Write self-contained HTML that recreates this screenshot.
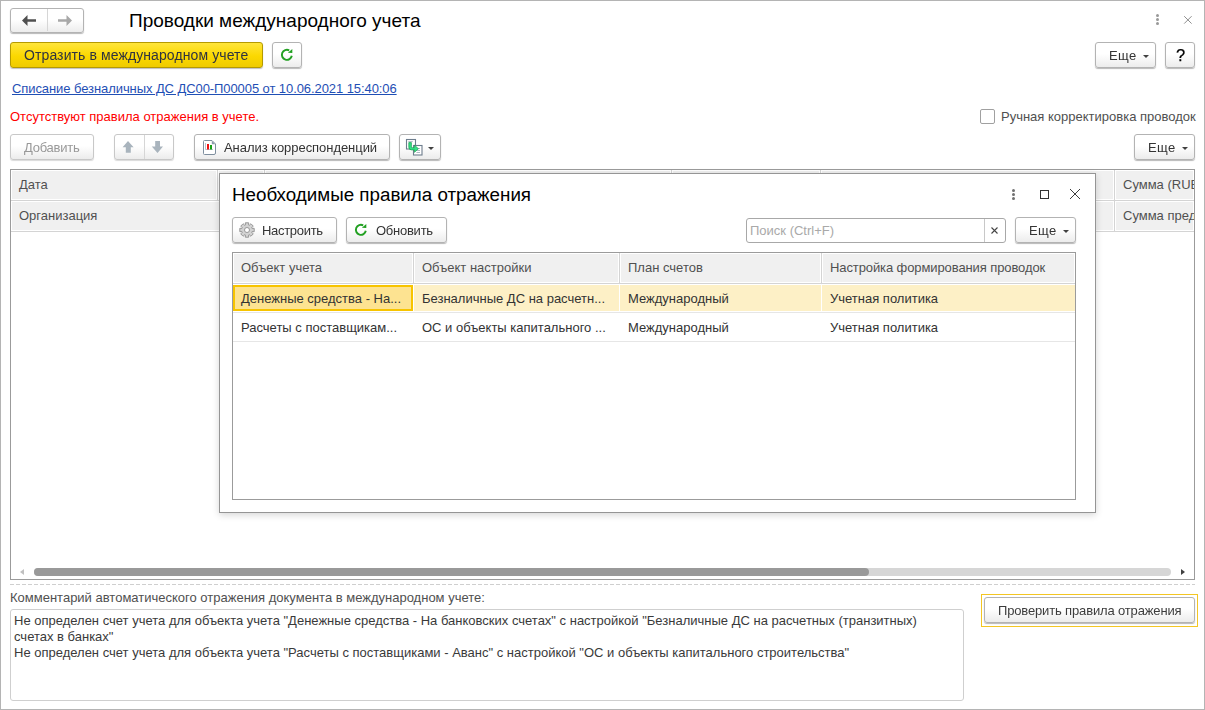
<!DOCTYPE html>
<html><head><meta charset="utf-8">
<style>
*{box-sizing:border-box}
html,body{margin:0;padding:0;width:1205px;height:710px;overflow:hidden;background:#fff}
body{font-family:"Liberation Sans",sans-serif;font-size:13px;color:#333;position:relative}
.a{position:absolute}
.g{transform:translateZ(0)}
.t{position:absolute;white-space:nowrap;line-height:16px;font-size:13px;padding-top:1px}
.win{position:absolute;left:0;top:0;width:1205px;height:710px;border:1px solid #b4b4b4}
.btn{position:absolute;border:1px solid #b3b3b3;border-radius:3px;background:linear-gradient(#fff 0%,#fff 45%,#ececec 100%);box-shadow:0 1px 1px rgba(0,0,0,.28)}
.dis{border-color:#c8c8c8;box-shadow:0 1px 1px rgba(0,0,0,.15)}
.ybtn{position:absolute;border:1px solid #b59a00;border-radius:3px;background:linear-gradient(#ffe53a 0%,#fbd800 55%,#efcb00 100%);box-shadow:0 1px 1px rgba(0,0,0,.25)}
.tri{position:absolute;width:0;height:0;border-left:3px solid transparent;border-right:3px solid transparent;border-top:3px solid #404040}
.hdr{position:absolute;background:#f0f0f0}
.hc{position:absolute;background:#f0f0f0;box-shadow:inset 0 0 0 1px #fff}
.vl{position:absolute;width:1px;background:#d4d4d4}
.hl{position:absolute;height:1px;background:#d4d4d4}
</style></head><body>
<div class="win"></div>

<!-- nav buttons -->
<div class="btn" style="left:10px;top:8px;width:74px;height:25px"></div>
<div class="a" style="left:47px;top:9px;width:1px;height:22px;background:#d6d6d6"></div>
<svg class="a" style="left:22px;top:15px" width="14" height="11" viewBox="0 0 14 11"><path d="M0 5.5 L5.5 0 V4.2 H14 V6.8 H5.5 V11 Z" fill="#505050"/></svg>
<svg class="a" style="left:58px;top:15px" width="14" height="11" viewBox="0 0 14 11"><path d="M14 5.5 L8.5 0 V4.2 H0 V6.8 H8.5 V11 Z" fill="#a8a8a8"/></svg>

<div class="t" style="left:129px;top:8px;font-size:19px;line-height:24px;color:#000">Проводки международного учета</div>

<!-- top-right icons -->
<div class="a" style="left:1156px;top:14px;width:3px;height:3px;border-radius:50%;background:#999"></div>
<div class="a" style="left:1156px;top:18px;width:3px;height:3px;border-radius:50%;background:#999"></div>
<div class="a" style="left:1156px;top:22px;width:3px;height:3px;border-radius:50%;background:#999"></div>
<svg class="a" style="left:1183px;top:15px" width="10" height="10" viewBox="0 0 10 10"><path d="M1.2 1.2 L8.6 8.6 M8.6 1.2 L1.2 8.6" stroke="#8f8f8f" stroke-width="1"/></svg>

<!-- command bar -->
<div class="ybtn" style="left:10px;top:42px;width:253px;height:26px"></div>
<div class="t g" style="left:24px;top:46px;font-size:14px;letter-spacing:0.1px;color:#2f3340">Отразить в международном учете</div>
<div class="btn" style="left:272px;top:42px;width:30px;height:26px"></div>
<svg class="a" style="left:280px;top:48px" width="14" height="14" viewBox="0 0 14 14"><path d="M9.2 2.4 A5 5 0 1 0 11.8 7.8" fill="none" stroke="#22a022" stroke-width="1.9"/><path d="M7.9 4.7 L12.3 0.9 L12.3 4.9 Z" fill="#22a022"/></svg>

<div class="btn" style="left:1095px;top:42px;width:61px;height:26px"></div>
<div class="t g" style="left:1109px;top:47px;color:#333;letter-spacing:0.35px">Еще</div>
<div class="tri" style="left:1143px;top:55px"></div>
<div class="btn" style="left:1165px;top:42px;width:30px;height:26px"></div>
<div class="t g" style="left:1176px;top:45px;font-size:16.5px;line-height:19px;color:#000;-webkit-text-stroke:0.25px #000">?</div>

<!-- link & info -->
<div class="t" style="left:12px;top:80px;color:#1f4fb5;text-decoration:underline;letter-spacing:-0.08px">Списание безналичных ДС ДС00-П00005 от 10.06.2021 15:40:06</div>
<div class="t" style="left:10px;top:108px;color:#ff0000">Отсутствуют правила отражения в учете.</div>

<div class="a" style="left:980px;top:109px;width:15px;height:15px;border:1px solid #a0a0a0;border-radius:2px;background:#fff"></div>
<div class="t" style="left:1001px;top:108px;color:#505050">Ручная корректировка проводок</div>

<!-- toolbar -->
<div class="btn dis" style="left:10px;top:134px;width:84px;height:26px"></div>
<div class="t g" style="left:24px;top:139px;color:#999;letter-spacing:-0.25px">Добавить</div>
<div class="btn dis" style="left:114px;top:134px;width:60px;height:26px"></div>
<div class="a" style="left:144px;top:135px;width:1px;height:24px;background:#d6d6d6"></div>
<svg class="a" style="left:122px;top:141px" width="13" height="12" viewBox="0 0 13 12"><path d="M6 0 L11.6 6.2 H8.8 V11.8 H3.8 V6.2 H0.6 Z" fill="#a9b4bd"/></svg>
<svg class="a" style="left:151px;top:141px" width="13" height="13" viewBox="0 0 13 13"><path d="M6.5 12 L12 5.6 H9 V0 H4.2 V5.6 H0.8 Z" fill="#a9b4bd"/></svg>
<div class="btn" style="left:194px;top:134px;width:196px;height:26px"></div>
<svg class="a" style="left:203px;top:140px" width="13" height="15" viewBox="0 0 13 15"><path d="M1.5 0.5 H9 L12.5 4 V13 Q12.5 14.5 11 14.5 H1.5 Q0.5 14.5 0.5 13.5 V1.5 Q0.5 0.5 1.5 0.5Z" fill="#fff" stroke="#7e8e9e" stroke-width="1"/><path d="M8.8 0.8 V4.2 H12.2Z" fill="#8a9aaa"/><path d="M2.5 3 V9.5 H10" fill="none" stroke="#a8b4c0" stroke-width=".8"/><rect x="4" y="4" width="2" height="5.5" fill="#f01010"/><rect x="7" y="5" width="2" height="4.5" fill="#18a018"/></svg>
<div class="t g" style="left:224px;top:139px;color:#333;letter-spacing:-0.05px">Анализ корреспонденций</div>
<div class="btn" style="left:399px;top:134px;width:42px;height:26px"></div>
<svg class="a" style="left:405px;top:138px" width="18" height="18" viewBox="0 0 18 18"><rect x="1.5" y="1.5" width="9" height="9.5" fill="#fff" stroke="#6d7d8d" stroke-width="1.1"/><path d="M3.3 3.6 H7.8" stroke="#9aa6b2" stroke-width=".8"/><rect x="8.5" y="7.5" width="8.5" height="9.5" fill="#fff" stroke="#6d7d8d" stroke-width="1.1"/><path d="M11.5 10.5 H15 M11.5 12.5 H15 M11.5 14.5 H15" stroke="#9aa6b2" stroke-width=".8"/><path d="M3.8 4.6 H6.4 V9 Q6.4 9.7 7.1 9.7 H9.5 V7.2 L13.4 10.7 L9.5 14.3 V11.9 H6.6 Q3.8 11.9 3.8 9.2 Z" fill="#33df86" stroke="#16a04c" stroke-width=".7" stroke-linejoin="round"/></svg>
<div class="tri" style="left:428px;top:147px"></div>
<div class="btn" style="left:1134px;top:134px;width:61px;height:26px"></div>
<div class="t g" style="left:1148px;top:139px;color:#333;letter-spacing:0.35px">Еще</div>
<div class="tri" style="left:1182px;top:147px"></div>

<!-- main table -->
<div class="a" style="left:10px;top:169px;width:1185px;height:411px;border:1px solid #9b9b9b;background:#fff"></div>
<div class="a" style="left:11px;top:170px;width:1183px;height:62px;background:#d4d4d4"></div>
<div class="hc" style="left:11px;top:170px;width:206px;height:30px"></div>
<div class="hc" style="left:218px;top:170px;width:46px;height:30px"></div>
<div class="hc" style="left:265px;top:170px;width:406px;height:30px"></div>
<div class="hc" style="left:672px;top:170px;width:148px;height:30px"></div>
<div class="hc" style="left:821px;top:170px;width:293px;height:30px"></div>
<div class="hc" style="left:1115px;top:170px;width:79px;height:30px"></div>
<div class="hc" style="left:11px;top:201px;width:1103px;height:30px"></div>
<div class="hc" style="left:1115px;top:201px;width:79px;height:30px"></div>
<div class="t" style="left:19px;top:176px;color:#505050">Дата</div>
<div class="t" style="left:19px;top:207px;color:#505050">Организация</div>
<div class="a" style="left:1115px;top:170px;width:79px;height:61px;overflow:hidden">
<div class="t" style="left:8px;top:6px;color:#505050">Сумма (RUB)</div>
<div class="t" style="left:8px;top:37px;color:#505050">Сумма представления</div>
</div>

<!-- scrollbar -->
<div class="a" style="left:34px;top:568px;width:1137px;height:8px;border-radius:4px;background:#d6d6d6"></div>
<div class="a" style="left:34px;top:568px;width:835px;height:8px;border-radius:4px;background:#999"></div>
<div class="a" style="left:20px;top:569px;width:0;height:0;border-top:3px solid transparent;border-bottom:3px solid transparent;border-right:4px solid #c0c0c0"></div>
<div class="a" style="left:1181px;top:569px;width:0;height:0;border-top:3px solid transparent;border-bottom:3px solid transparent;border-left:4px solid #404040"></div>

<!-- dashed separator -->
<div class="a" style="left:10px;top:584px;width:1185px;height:1px;background:repeating-linear-gradient(90deg,#cfcfcf 0 4px,transparent 4px 6px)"></div>

<div class="t" style="left:10px;top:589px;color:#505050">Комментарий автоматического отражения документа в международном учете:</div>
<div class="a" style="left:10px;top:609px;width:954px;height:92px;border:1px solid #cfcfcf;border-radius:3px"></div>
<div class="t" style="left:14px;top:612px;color:#3a3a3a">Не определен счет учета для объекта учета "Денежные средства - На банковских счетах" с настройкой "Безналичные ДС на расчетных (транзитных)</div>
<div class="t" style="left:14px;top:628px;color:#3a3a3a">счетах в банках"</div>
<div class="t" style="left:14px;top:644px;color:#3a3a3a">Не определен счет учета для объекта учета "Расчеты с поставщиками - Аванс" с настройкой "ОС и объекты капитального строительства"</div>

<div class="a" style="left:981px;top:594px;width:217px;height:33px;border:1px solid #f3c623"></div>
<div class="btn" style="left:984px;top:597px;width:211px;height:26px"></div>
<div class="t g" style="left:998px;top:602px;color:#3c3c3c;letter-spacing:-0.15px">Проверить правила отражения</div>

<!-- dialog -->
<div class="a" style="left:219px;top:173px;width:877px;height:340px;border:1px solid #959595;background:#fff;box-shadow:0 2px 7px rgba(0,0,0,.16)"></div>
<div class="t" style="left:232px;top:182px;font-size:18.8px;line-height:24px;color:#000">Необходимые правила отражения</div>
<div class="a" style="left:1012px;top:189px;width:3px;height:3px;border-radius:50%;background:#707070"></div>
<div class="a" style="left:1012px;top:193px;width:3px;height:3px;border-radius:50%;background:#707070"></div>
<div class="a" style="left:1012px;top:197px;width:3px;height:3px;border-radius:50%;background:#707070"></div>
<div class="a" style="left:1040px;top:190px;width:9px;height:9px;border:1px solid #333"></div>
<svg class="a" style="left:1069px;top:188px" width="12" height="12" viewBox="0 0 12 12"><path d="M1 1 L11 11 M11 1 L1 11" stroke="#333" stroke-width="0.95"/></svg>

<div class="btn" style="left:232px;top:217px;width:105px;height:26px"></div>
<svg class="a" style="left:239px;top:222px" width="16" height="16" viewBox="0 0 16 16"><path d="M6.31 3.08 L6.34 0.79 L9.66 0.79 L9.69 3.08 L10.28 3.33 L11.92 1.72 L14.28 4.08 L12.67 5.72 L12.92 6.31 L15.21 6.34 L15.21 9.66 L12.92 9.69 L12.67 10.28 L14.28 11.92 L11.92 14.28 L10.28 12.67 L9.69 12.92 L9.66 15.21 L6.34 15.21 L6.31 12.92 L5.72 12.67 L4.08 14.28 L1.72 11.92 L3.33 10.28 L3.08 9.69 L0.79 9.66 L0.79 6.34 L3.08 6.31 L3.33 5.72 L1.72 4.08 L4.08 1.72 L5.72 3.33Z" fill="#d2d2d2" stroke="#8e8e8e" stroke-width="0.9" stroke-linejoin="round"/><circle cx="8" cy="8" r="2.5" fill="#fff" stroke="#8e8e8e" stroke-width="0.9"/></svg>
<div class="t g" style="left:262px;top:222px;color:#333;letter-spacing:-0.3px">Настроить</div>
<div class="btn" style="left:346px;top:217px;width:101px;height:26px"></div>
<svg class="a" style="left:354px;top:223px" width="14" height="14" viewBox="0 0 14 14"><path d="M9.2 2.4 A5 5 0 1 0 11.8 7.8" fill="none" stroke="#22a022" stroke-width="1.9"/><path d="M7.9 4.7 L12.3 0.9 L12.3 4.9 Z" fill="#22a022"/></svg>
<div class="t g" style="left:376px;top:222px;color:#333;letter-spacing:-0.25px">Обновить</div>

<div class="a" style="left:746px;top:218px;width:260px;height:25px;border:1px solid #a8a8a8;border-radius:3px;background:#fff"></div>
<div class="a" style="left:984px;top:219px;width:1px;height:23px;background:#c8c8c8"></div>
<div class="t" style="left:750px;top:222px;color:#a9a9a9">Поиск (Ctrl+F)</div>
<svg class="a" style="left:991px;top:227px" width="7" height="7" viewBox="0 0 7 7"><path d="M.5 .5 L6.5 6.5 M6.5 .5 L.5 6.5" stroke="#444" stroke-width="1.1"/></svg>
<div class="btn" style="left:1015px;top:217px;width:61px;height:26px"></div>
<div class="t g" style="left:1029px;top:222px;color:#333;letter-spacing:0.35px">Еще</div>
<div class="tri" style="left:1063px;top:230px"></div>

<!-- dialog table -->
<div class="a" style="left:232px;top:252px;width:844px;height:248px;border:1px solid #9b9b9b;background:#fff"></div>
<div class="a" style="left:233px;top:253px;width:842px;height:31px;background:#d4d4d4"></div>
<div class="hc" style="left:233px;top:253px;width:180px;height:30px"></div>
<div class="hc" style="left:414px;top:253px;width:205px;height:30px"></div>
<div class="hc" style="left:620px;top:253px;width:201px;height:30px"></div>
<div class="hc" style="left:822px;top:253px;width:253px;height:30px"></div>
<div class="t" style="left:241px;top:259px;color:#505050">Объект учета</div>
<div class="t" style="left:422px;top:259px;color:#505050">Объект настройки</div>
<div class="t" style="left:628px;top:259px;color:#505050">План счетов</div>
<div class="t" style="left:830px;top:259px;color:#505050;letter-spacing:-0.1px">Настройка формирования проводок</div>

<div class="a" style="left:414px;top:285px;width:661px;height:26px;background:#fdf0c6"></div>
<div class="a" style="left:619px;top:285px;width:1px;height:26px;background:#fff"></div>
<div class="a" style="left:821px;top:285px;width:1px;height:26px;background:#fff"></div>
<div class="a" style="left:233px;top:285px;width:180px;height:26px;background:#fde391;border:2px solid #f7c400"></div>
<div class="hl" style="left:233px;top:312px;width:842px;background:#e6e6e6"></div>
<div class="hl" style="left:233px;top:341px;width:842px;background:#e6e6e6"></div>
<div class="t" style="left:241px;top:290px;color:#333">Денежные средства - На...</div>
<div class="t" style="left:422px;top:290px;color:#333">Безналичные ДС на расчетн...</div>
<div class="t" style="left:628px;top:290px;color:#333">Международный</div>
<div class="t" style="left:830px;top:290px;color:#333">Учетная политика</div>
<div class="t" style="left:241px;top:319px;color:#333">Расчеты с поставщикам...</div>
<div class="t" style="left:422px;top:319px;color:#333">ОС и объекты капитального ...</div>
<div class="t" style="left:628px;top:319px;color:#333">Международный</div>
<div class="t" style="left:830px;top:319px;color:#333">Учетная политика</div>

</body></html>
